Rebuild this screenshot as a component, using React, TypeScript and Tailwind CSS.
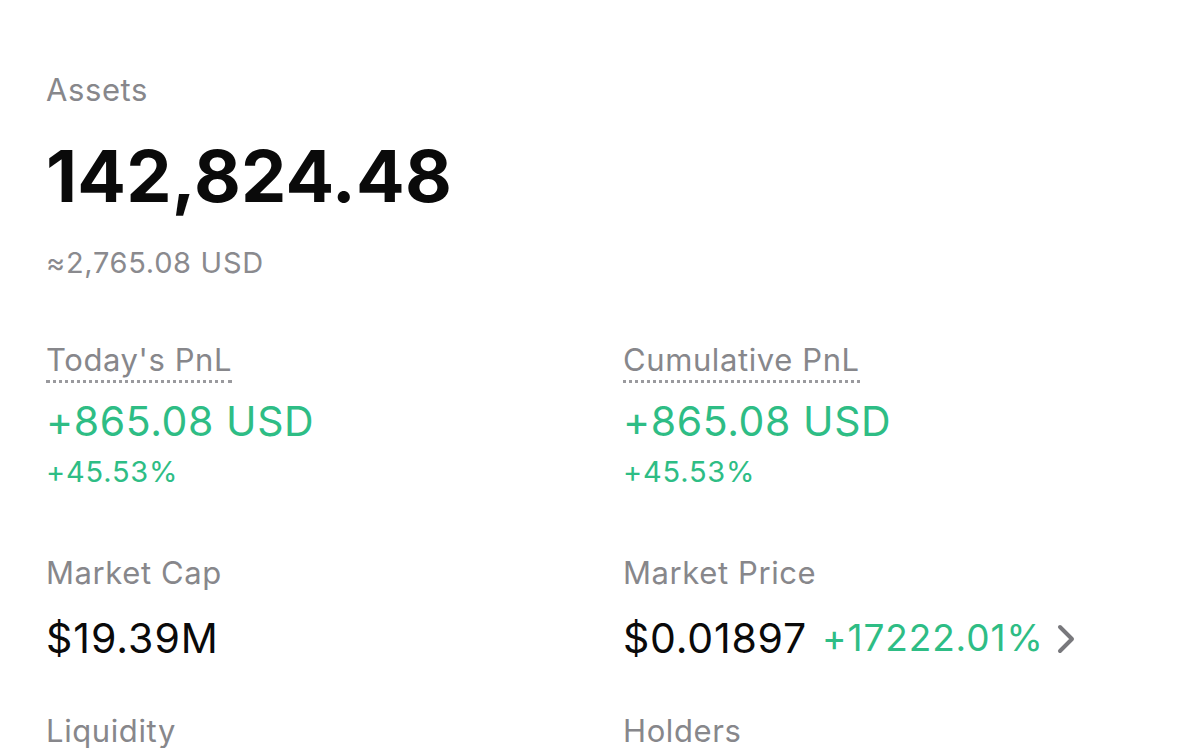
const font = { fontFamily: 'Inter, "Liberation Sans", sans-serif' }

function Label({ text, dotted }: { text: string; dotted?: boolean }) {
  return (
    <div className="text-[31px] leading-[36px] tracking-[0.6px] text-[#87878b]">
      <span
        className={
          dotted
            ? 'border-b-[3px] border-dotted border-[#9a9a9e] pb-[2px]'
            : ''
        }
      >
        {text}
      </span>
    </div>
  )
}

function PnL({ label }: { label: string }) {
  return (
    <div>
      <Label text={label} dotted />
      <div className="mt-[19px] text-[41px] leading-[48px] tracking-[0.6px] text-[#2ebd85]">
        +865.08 USD
      </div>
      <div className="mt-[10px] text-[29px] leading-[34px] tracking-[0.8px] text-[#2ebd85]">
        +45.53%
      </div>
    </div>
  )
}

export default function App() {
  return (
    <main
      className="min-h-screen h-[748px] overflow-hidden bg-white pl-[46px] pt-[72px]"
      style={font}
    >
      <Label text="Assets" />
      <div className="mt-[28px] text-[72px] leading-[80px] font-bold tracking-[0.2px] text-[#0a0a0a]">
        142,824.48
      </div>
      <div className="mt-[30px] text-[29px] leading-[34px] tracking-[0.7px] text-[#8a8a8e]">
        ≈2,765.08 USD
      </div>

      <div className="mt-[62px] grid grid-cols-[577px_1fr]">
        <PnL label="Today's PnL" />
        <PnL label="Cumulative PnL" />

        <div className="mt-[66px]">
          <Label text="Market Cap" />
          <div className="mt-[25px] text-[41px] leading-[44px] tracking-[1px] text-[#0a0a0a]">
            $19.39M
          </div>
        </div>
        <div className="mt-[66px]">
          <Label text="Market Price" />
          <div className="mt-[25px] flex items-center text-[41px] leading-[44px] tracking-[0.8px] text-[#0a0a0a]">
            <span>$0.01897</span>
            <span className="ml-[15px] text-[37px] tracking-[0.9px] text-[#2ebd85]">
              +17222.01%
            </span>
            <svg
              className="ml-[12px] mt-[2px]"
              width="22"
              height="32"
              viewBox="0 0 22 32"
              fill="none"
            >
              <path
                d="M4 4 L16 16 L4 28"
                stroke="#78787c"
                strokeWidth="4"
                strokeLinecap="round"
                strokeLinejoin="round"
              />
            </svg>
          </div>
        </div>

        <div className="mt-[53px]">
          <Label text="Liquidity" />
        </div>
        <div className="mt-[53px]">
          <Label text="Holders" />
        </div>
      </div>
    </main>
  )
}
